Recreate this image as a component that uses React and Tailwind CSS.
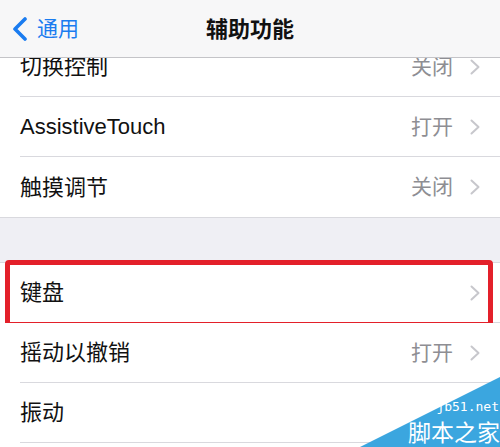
import React from "react";

const FONT = { fontFamily: '"Liberation Sans", "Noto Sans CJK SC", sans-serif' };

function Chevron() {
  return (
    <svg width="10" height="16" viewBox="0 0 10 16" className="shrink-0">
      <polyline points="1.5,1.5 8.5,8 1.5,14.5" fill="none" stroke="#c7c7cc" strokeWidth="2" strokeLinecap="round" strokeLinejoin="round" />
    </svg>
  );
}

function Row({ label, value, last, children }) {
  return (
    <div className="relative bg-white pl-[20px]">
      <div className={"flex h-[60px] items-center justify-between pr-[20px] " + (last ? "" : "border-b border-[#d9d9de]")}>
        <span className="text-[22px] text-[#111]">{label}</span>
        <div className="flex items-center gap-[17px]">
          {value && <span className="text-[21px] text-[#8e8e93]">{value}</span>}
          <Chevron />
        </div>
      </div>
      {children}
    </div>
  );
}

export default function App() {
  return (
    <div className="relative h-[447px] w-[500px] overflow-hidden bg-[#efeff4]" style={FONT}>
      {/* nav bar overlay */}
      <div className="absolute inset-x-0 top-0 z-10 flex h-[58px] items-center border-b border-[#c4c4c8] bg-[#f7f7f8]">
        <div className="flex items-center pl-[12px]">
          <svg width="16" height="24" viewBox="0 0 16 24">
            <polyline points="13,2 3,12 13,22" fill="none" stroke="#1a7cf0" strokeWidth="3.6" strokeLinecap="round" strokeLinejoin="round" />
          </svg>
          <span className="ml-[9px] text-[21px] text-[#1a7cf0]">通用</span>
        </div>
        <div className="absolute inset-x-0 top-0 flex h-[58px] items-center justify-center">
          <span className="text-[22px] font-semibold text-[#111]">辅助功能</span>
        </div>
      </div>

      <div className="pt-[37px]">
        <div className="border-b border-[#d9d9de]">
          <Row label="切换控制" value="关闭" />
          <Row label="AssistiveTouch" value="打开" />
          <Row label="触摸调节" value="关闭" last />
        </div>

        <div className="mt-[44px] border-t border-[#d9d9de]">
          <Row label="键盘">
            <div className="pointer-events-none absolute bottom-[-4px] left-[5px] right-[7px] top-[-3px] rounded-[4px] border-[5px] border-[#e3202a]" />
          </Row>
          <Row label="摇动以撤销" value="打开" />
          <Row label="振动" />
          <Row label="" />
        </div>
      </div>

      {/* watermark */}
      <div className="pointer-events-none absolute bottom-0 right-0 h-[70px] w-[140px]">
        <svg width="140" height="70" viewBox="0 0 140 70" className="absolute inset-0">
          <polygon points="0,70 140,0 140,70" fill="#3ba6df" />
        </svg>
        <div className="absolute right-[1px] top-[23px] text-[13px] leading-[13px] text-white" style={{ fontFamily: '"DejaVu Sans Mono", monospace' }}>jb51.net</div>
        <div className="absolute right-0 top-[42px] text-[23px] leading-[24px] text-white" style={{ fontFamily: '"Noto Sans CJK SC", sans-serif' }}>脚本之家</div>
      </div>
    </div>
  );
}
